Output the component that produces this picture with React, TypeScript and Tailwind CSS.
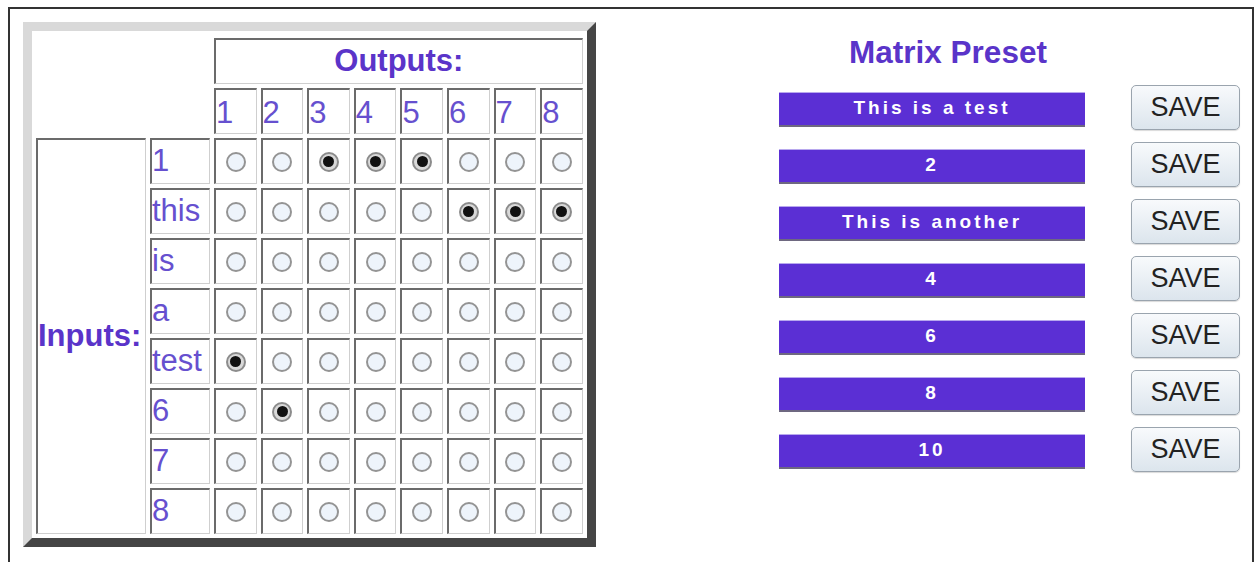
import React from "react";

const FONT = { fontFamily: '"Liberation Sans", Arial, sans-serif' };

const inputs = ["1", "this", "is", "a", "test", "6", "7", "8"];
const checked: Record<number, number[]> = {
  0: [2, 3, 4],
  1: [5, 6, 7],
  4: [0],
  5: [1],
};
const presets = ["This is a test", "2", "This is another", "4", "6", "8", "10"];

function Radio({ on }: { on: boolean }) {
  return on ? (
    <span className="flex h-[20px] w-[20px] items-center justify-center rounded-full border-2 border-[#8c8c8c] bg-[#d9d9d9]">
      <span className="h-[11px] w-[11px] rounded-full bg-[#111]" />
    </span>
  ) : (
    <span className="h-[20px] w-[20px] rounded-full border-2 border-[#949494] bg-[#eef4fb]" />
  );
}

const cell =
  "border-t-2 border-l-2 border-t-[#6b6b6b] border-l-[#6b6b6b] border-r border-b border-r-[#cfcfcf] border-b-[#cfcfcf] bg-white";

export default function App() {
  return (
    <div className="h-[562px] w-[1256px] overflow-hidden bg-white pl-[8px] pt-[7px]" style={FONT}>
      <div className="flex h-[600px] w-[1246px] border-l-2 border-r-2 border-t-2 border-[#333]">
        {/* Matrix table */}
        <div className="ml-[13px] mt-[13px] h-[525px] w-[573px] shrink-0 border-[9px] border-t-[#d9d9d9] border-l-[#d9d9d9] border-r-[#454545] border-b-[#454545] bg-white">
          <div className="grid grid-cols-[110px_60px_repeat(8,42.6px)] grid-rows-[repeat(10,46px)] gap-[4px] pl-[4px] pt-[7px]">
            <div className="col-span-2 row-span-2" />
            <div className={`${cell} col-span-8 flex items-center justify-center text-[31px] font-bold text-[#5a34c9]`}>
              Outputs:
            </div>
            {Array.from({ length: 8 }, (_, i) => (
              <div key={`h${i}`} className={`${cell} flex items-center pt-[2px] text-[31px] leading-none text-[#6650cf]`}>
                {i + 1}
              </div>
            ))}
            <div className={`${cell} row-span-8 flex items-center text-[31px] font-bold text-[#5a34c9]`}>
              Inputs:
            </div>
            {inputs.map((label, r) => (
              <React.Fragment key={label + r}>
                <div className={`${cell} flex items-center pb-[3px] text-[31px] leading-none text-[#6650cf]`}>{label}</div>
                {Array.from({ length: 8 }, (_, c) => (
                  <div key={c} className={`${cell} flex items-center justify-center`}>
                    <Radio on={(checked[r] || []).includes(c)} />
                  </div>
                ))}
              </React.Fragment>
            ))}
          </div>
        </div>

        {/* Presets */}
        <div className="ml-[183px] flex flex-col pt-[28px]">
          <div className="w-[306px] pl-[32px] text-center text-[31.5px] font-bold leading-none text-[#5a34c9]">
            Matrix Preset
          </div>
          <div className="mt-[16px] flex flex-col gap-[12px]">
            {presets.map((p) => (
              <div key={p} className="flex items-center">
                <div className="mt-[4px] flex h-[35px] w-[306px] items-center justify-center border-t border-t-[#b8a8ee] border-b-2 border-b-[#6e6880] bg-[#5b2fd4] text-[19px] font-bold tracking-[3px] text-white">
                  {p}
                </div>
                <button className="ml-[46px] flex h-[45px] w-[109px] items-center justify-center rounded-[5px] border border-[#9aa4ae] bg-gradient-to-b from-[#f8fafc] to-[#dce5ed] text-[27px] text-[#222] shadow-[0_1px_1px_rgba(0,0,0,0.15)]">
                  SAVE
                </button>
              </div>
            ))}
          </div>
        </div>
      </div>
    </div>
  );
}
